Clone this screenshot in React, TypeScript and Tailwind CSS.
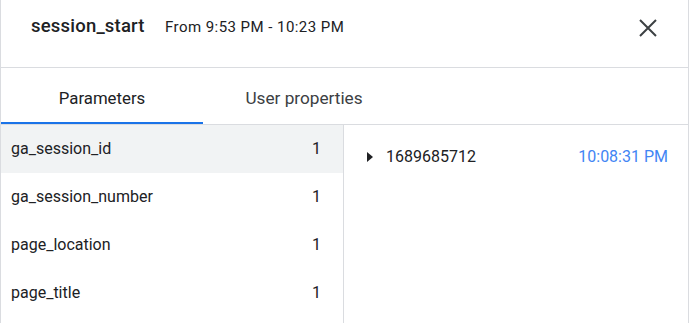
import React from "react";

const rows = [
  { name: "ga_session_id", count: "1", active: true },
  { name: "ga_session_number", count: "1" },
  { name: "page_location", count: "1" },
  { name: "page_title", count: "1" },
];

export default function App() {
  return (
    <div
      className="w-[691px] h-[323px] bg-white overflow-hidden"
      style={{ fontFamily: "Roboto, 'Liberation Sans', sans-serif" }}
    >
      <div className="w-[689px] h-[323px] border-l border-r border-[#dadce0] flex flex-col">
        <div className="h-[68px] shrink-0 border-b border-[#dadce0] flex items-center pl-[30px] pr-[30px] pb-[13px]">
          <div className="text-[18.5px] font-medium text-[#202124] w-[134px] tracking-[0.2px]">session_start</div>
          <div className="text-[15px] text-[#202124] flex-1 tracking-[0.45px]">From 9:53 PM - 10:23 PM</div>
          <svg width="18" height="18" viewBox="0 0 18 18" className="mr-[1px] mt-[1px]">
            <path d="M1 1 L17 17 M17 1 L1 17" stroke="#3c4043" strokeWidth="2" />
          </svg>
        </div>
        <div className="h-[57px] shrink-0 border-b border-[#dadce0] flex">
          <div className="w-[202px] flex flex-col">
            <div className="flex-1 flex items-center justify-center text-[16.8px] text-[#202124] pt-[8px]">Parameters</div>
            <div className="h-[2px] bg-[#1a73e8]" />
          </div>
          <div className="w-[202px] flex flex-col">
            <div className="flex-1 flex items-center justify-center text-[17.2px] text-[#3c4043] pt-[8px]">User properties</div>
            <div className="h-[2px]" />
          </div>
        </div>
        <div className="flex flex-1 min-h-0">
          <div className="w-[343px] border-r border-[#dadce0] flex flex-col">
            {rows.map((r) => (
              <div
                key={r.name}
                className={`h-[48px] shrink-0 flex items-center justify-between pl-[10px] pr-[22px] text-[16px] text-[#202124] ${r.active ? "bg-[#f1f3f4]" : ""}`}
              >
                <span>{r.name}</span>
                <span>{r.count}</span>
              </div>
            ))}
          </div>
          <div className="flex-1 flex items-start pt-[21px] pl-[23px] pr-[20px]">
            <div className="flex items-center h-[22px] w-full">
              <svg width="6" height="10" viewBox="0 0 6 10" className="mr-[13px]">
                <path d="M0 0 L6 5 L0 10 Z" fill="#202124" />
              </svg>
              <span className="text-[16px] text-[#202124] flex-1">1689685712</span>
              <span className="text-[16px] text-[#4285f4]">10:08:31 PM</span>
            </div>
          </div>
        </div>
      </div>
    </div>
  );
}
